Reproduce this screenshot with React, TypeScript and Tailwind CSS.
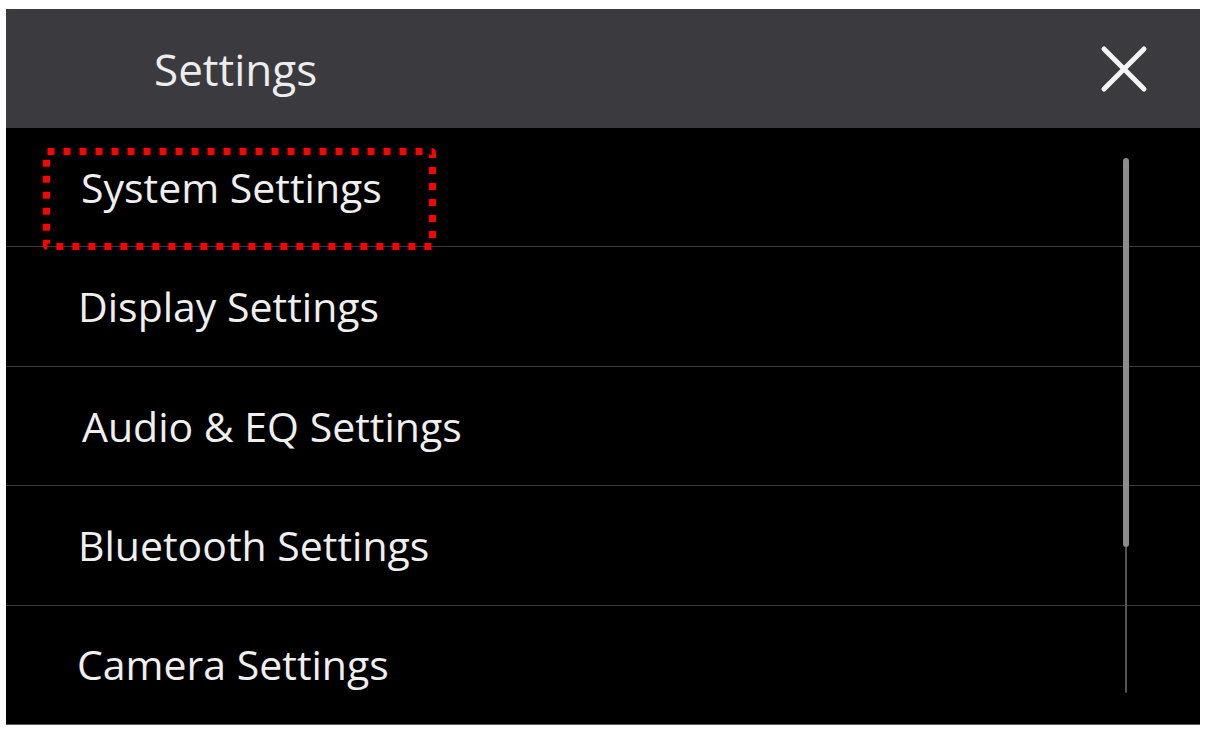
import React from 'react'

const items = [
  { label: 'System Settings', pad: 'pl-[75px]' },
  { label: 'Display Settings', pad: 'pl-[72px]' },
  { label: 'Audio & EQ Settings', pad: 'pl-[76px]' },
  { label: 'Bluetooth Settings', pad: 'pl-[72px]' },
  { label: 'Camera Settings', pad: 'pl-[71px]' },
]

function CloseIcon() {
  return (
    <svg width="48" height="48" viewBox="0 0 48 48" fill="none">
      <line x1="4" y1="4" x2="44" y2="44" stroke="#f4f4f4" strokeWidth="5" strokeLinecap="round" />
      <line x1="44" y1="4" x2="4" y2="44" stroke="#f4f4f4" strokeWidth="5" strokeLinecap="round" />
    </svg>
  )
}

export default function App() {
  return (
    <div className="w-[1209px] h-[734px] bg-white pt-[9px] pl-[6px]" style={{ fontFamily: '"Open Sans", "Noto Sans", sans-serif' }}>
      <div className="w-[1194px] h-[716px] bg-black flex flex-col border-b border-[#5a5a5a]">
        <header className="h-[119px] shrink-0 bg-[#3b3b3f] flex items-center justify-between pl-[148px] pr-[52px]">
          <h1 className="text-[44px] text-[#ededed] font-normal">Settings</h1>
          <button className="flex items-center justify-center" aria-label="Close">
            <CloseIcon />
          </button>
        </header>

        <div className="relative flex-1 flex flex-col">
          {items.map((item, i) => (
            <div
              key={item.label}
              className={`relative flex-1 flex items-center ${item.pad} ${i < items.length - 1 ? 'border-b border-[#3a3a3a]' : ''}`}
            >
              <span className="text-[41px] text-[#efefef] leading-none whitespace-nowrap">{item.label}</span>
              {i === 0 && (
                <svg className="absolute left-[37px] top-[20px]" width="393" height="102" viewBox="0 0 393 102" fill="none">
                  <rect
                    x="3.5"
                    y="3.5"
                    width="386"
                    height="95"
                    rx="1"
                    stroke="#ff0000"
                    strokeWidth="7"
                    strokeDasharray="7 9"
                  />
                </svg>
              )}
            </div>
          ))}

          {/* scrollbar */}
          <div className="absolute left-[1117px] top-[30px] flex flex-col items-center">
            <div className="w-[6px] h-[389px] rounded-full bg-[#8c8c8c]" />
            <div className="w-[2px] h-[146px] bg-[#555555] rounded-b-full" />
          </div>
        </div>
      </div>
    </div>
  )
}
